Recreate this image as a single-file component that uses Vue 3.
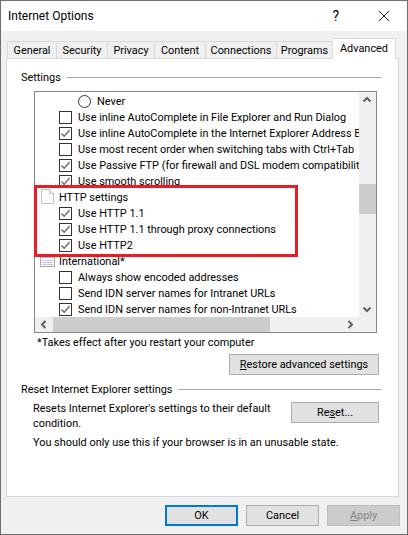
<template>
  <div class="window">
    <div class="titlebar">
      <span class="title">Internet Options</span>
      <span class="help">?</span>
      <svg class="close" width="12" height="12" viewBox="0 0 12 12">
        <path d="M1 1 L11 11 M11 1 L1 11" stroke="#222" stroke-width="1" fill="none" />
      </svg>
    </div>

    <div class="body">
      <div class="tabs">
        <div
          v-for="t in tabs"
          :key="t.name"
          class="tab"
          :class="{ active: t.name === 'Advanced' }"
          :style="{ width: t.w + 'px' }"
        >{{ t.name }}</div>
      </div>

      <div class="panel">
        <div class="legend"><span>Settings</span><i></i></div>

        <div class="listbox">
          <div class="rows">
            <div v-for="(r, i) in rows" :key="i" class="row" :class="r.type">
              <svg v-if="r.type === 'page'" class="gicon" width="15" height="16" viewBox="0 0 15 16">
                <path d="M1.5 .5 H9.5 L13.5 4.5 V14.5 H1.5 Z" fill="#fdfdfd" stroke="#c4c4c4" />
                <path d="M9.5 .5 V4.5 H13.5" fill="#f0f0f0" stroke="#c4c4c4" />
              </svg>
              <svg v-else-if="r.type === 'intl'" class="gicon" width="15" height="16" viewBox="0 0 15 16">
                <rect x=".5" y="1.5" width="14" height="12" fill="#fff" stroke="#a9a9a9" />
                <rect x="1" y="2" width="13" height="3" fill="#a9c1e4" />
                <path d="M2 7.5 H13 M2 9.5 H13 M2 11.5 H13" stroke="#bccbdf" />
              </svg>
              <svg v-else-if="r.type === 'radio'" class="radio" width="13" height="13" viewBox="0 0 13 13">
                <circle cx="6.5" cy="6.5" r="6" fill="#fff" stroke="#333" />
              </svg>
              <span v-else class="check">
                <svg v-if="r.on" width="11" height="11" viewBox="0 0 11 11">
                  <path d="M1.5 5.5 L4.2 8.3 L9.5 2" stroke="#666" stroke-width="1.3" fill="none" />
                </svg>
              </span>
              <span class="label">{{ r.text }}</span>
            </div>
          </div>

          <div class="vbar">
            <svg width="16" height="16" viewBox="0 0 16 16"><path d="M4.5 9.5 L8 6 L11.5 9.5" stroke="#606060" stroke-width="2" fill="none" /></svg>
            <div class="vtrack"><div class="vthumb"></div></div>
            <svg width="16" height="16" viewBox="0 0 16 16"><path d="M4.5 6.5 L8 10 L11.5 6.5" stroke="#606060" stroke-width="2" fill="none" /></svg>
          </div>

          <div class="hbar">
            <svg width="18" height="15" viewBox="0 0 18 15"><path d="M10.5 4 L7 7.5 L10.5 11" stroke="#606060" stroke-width="2" fill="none" /></svg>
            <div class="htrack"><div class="hthumb"></div></div>
            <svg width="18" height="15" viewBox="0 0 18 15"><path d="M7.5 4 L11 7.5 L7.5 11" stroke="#606060" stroke-width="2" fill="none" /></svg>
          </div>
          <div class="corner"></div>
        </div>

        <div class="note">*Takes effect after you restart your computer</div>
        <div class="restore-row">
          <button class="btn restore"><u>R</u>estore advanced settings</button>
        </div>

        <div class="legend second"><span>Reset Internet Explorer settings</span><i></i></div>
        <div class="reset-row">
          <p>Resets Internet Explorer's settings to their default condition.</p>
          <button class="btn reset">Re<u>s</u>et...</button>
        </div>
        <p class="warn">You should only use this if your browser is in an unusable state.</p>
      </div>

      <div class="footer">
        <button class="btn ok">OK</button>
        <button class="btn">Cancel</button>
        <button class="btn disabled"><u>A</u>pply</button>
      </div>
    </div>

    <!-- red annotation drawn on top of the screenshot -->
    <div class="highlight"></div>
  </div>
</template>

<script setup>
const tabs = [
  { name: 'General', w: 50 },
  { name: 'Security', w: 51 },
  { name: 'Privacy', w: 47 },
  { name: 'Content', w: 51 },
  { name: 'Connections', w: 71 },
  { name: 'Programs', w: 56 },
  { name: 'Advanced', w: 63 }
]

const rows = [
  { type: 'radio', text: 'Never' },
  { type: 'item', text: 'Use inline AutoComplete in File Explorer and Run Dialog', on: false },
  { type: 'item', text: 'Use inline AutoComplete in the Internet Explorer Address Bar', on: true },
  { type: 'item', text: 'Use most recent order when switching tabs with Ctrl+Tab', on: false },
  { type: 'item', text: 'Use Passive FTP (for firewall and DSL modem compatibility)', on: true },
  { type: 'item', text: 'Use smooth scrolling', on: true },
  { type: 'page', text: 'HTTP settings' },
  { type: 'item', text: 'Use HTTP 1.1', on: true },
  { type: 'item', text: 'Use HTTP 1.1 through proxy connections', on: true },
  { type: 'item', text: 'Use HTTP2', on: true },
  { type: 'intl', text: 'International*' },
  { type: 'item', text: 'Always show encoded addresses', on: false },
  { type: 'item', text: 'Send IDN server names for Intranet URLs', on: false },
  { type: 'item', text: 'Send IDN server names for non-Intranet URLs', on: true }
]
</script>

<style>
html, body {
  margin: 0;
  background: #fff;
}
</style>

<style scoped>
.window {
  position: relative;
  width: 408px;
  height: 535px;
  box-sizing: border-box;
  border: 1px solid #6e6e6e;
  overflow: hidden;
  display: flex;
  flex-direction: column;
  font-family: Roboto, "Liberation Sans", sans-serif;
  font-size: 10.9px;
  color: #000;
  background: #f0f0f0;
}

.titlebar {
  height: 30px;
  background: #fff;
  display: flex;
  align-items: center;
  flex-shrink: 0;
}
.title {
  margin-left: 7px;
  font-size: 12px;
}
.help {
  margin-left: auto;
  margin-right: 39px;
  font-size: 14px;
}
.close {
  margin-right: 17px;
}

.body {
  flex: 1;
  display: flex;
  flex-direction: column;
  padding: 7px 7px 0 5px;
}

.tabs {
  display: flex;
  align-items: flex-end;
  height: 21px;
  padding-left: 1px;
  margin-bottom: -1px;
  position: relative;
  z-index: 1;
}
.tab {
  height: 18px;
  box-sizing: border-box;
  border: 1px solid #d9d9d9;
  border-left-width: 0;
  border-bottom: 1px solid #d9d9d9;
  background: #f0f0f0;
  text-align: center;
  line-height: 17px;
}
.tab:first-child {
  border-left-width: 1px;
}
.tab.active {
  height: 21px;
  background: #fff;
  border-bottom: 0;
  line-height: 19px;
}

.panel {
  height: 439px;
  box-sizing: border-box;
  width: 393px;
  border: 1px solid #d9d9d9;
  background: #fff;
  padding: 11px 17px 0 14px;
}

.legend {
  display: flex;
  align-items: center;
  gap: 6px;
  height: 14px;
  line-height: 14px;
}
.legend span {
  padding-top: 1px;
}
.legend i {
  flex: 1;
  height: 1px;
  background: #a8a8a8;
}
.legend.second {
  margin-top: 7px;
}

.listbox {
  margin: 7px 4px 0 13px;
  height: 242px;
  box-sizing: border-box;
  border: 1px solid #828790;
  display: grid;
  grid-template-columns: 1fr 17px;
  grid-template-rows: 1fr 15px;
}
.rows {
  min-width: 0;
  overflow: hidden;
  padding-top: 1px;
}
.row {
  height: 16px;
  display: flex;
  align-items: center;
  padding-left: 24px;
  white-space: nowrap;
}
.row.page,
.row.intl {
  padding-left: 5px;
}
.row.radio {
  padding-left: 43px;
}
.gicon {
  margin-right: 4px;
  flex-shrink: 0;
}
.radio svg {
  margin-right: 6px;
  flex-shrink: 0;
}
.check {
  width: 13px;
  height: 13px;
  box-sizing: border-box;
  border: 1px solid #333;
  margin-right: 6px;
  flex-shrink: 0;
  display: flex;
  background: #fff;
}

.vbar {
  background: #f0f0f0;
  display: flex;
  flex-direction: column;
  grid-row: 1;
  grid-column: 2;
}
.vbar svg,
.hbar svg {
  flex-shrink: 0;
}
.vtrack {
  flex: 1;
  padding-top: 76px;
}
.vthumb {
  height: 30px;
  background: #cdcdcd;
}
.hbar {
  background: #f0f0f0;
  display: flex;
  grid-row: 2;
  grid-column: 1;
}
.htrack {
  flex: 1;
}
.hthumb {
  width: 217px;
  height: 15px;
  background: #cdcdcd;
}
.corner {
  background: #f0f0f0;
}

.note {
  margin: 1px 0 0 16px;
  height: 16px;
  line-height: 18px;
}
.restore-row {
  margin-top: 4px;
  display: flex;
  justify-content: flex-end;
  padding-right: 2px;
}

.btn {
  font: inherit;
  color: inherit;
  height: 21px;
  width: 73px;
  box-sizing: border-box;
  padding: 0;
  border: 1px solid #adadad;
  background: #e1e1e1;
}
.btn.restore {
  width: 150px;
}
.btn.reset {
  width: 88px;
  margin-top: 2px;
  flex-shrink: 0;
}
.btn.ok {
  border: 2px solid #0078d7;
}
.btn.disabled {
  background: #cccccc;
  border-color: #bfbfbf;
  color: #838383;
}

.reset-row {
  display: flex;
  justify-content: space-between;
  margin-top: 4px;
  padding: 0 2px 0 12px;
}
.reset-row p {
  margin: 0;
  padding-top: 1px;
  width: 250px;
  line-height: 15px;
}
.warn {
  margin: 4px 0 0 12px;
  line-height: 15px;
}

.footer {
  display: flex;
  gap: 8px;
  justify-content: flex-end;
  margin-top: 8px;
}

.highlight {
  position: absolute;
  left: 33px;
  top: 184px;
  width: 264px;
  height: 72px;
  box-sizing: border-box;
  border: 3px solid #ed1c24;
  pointer-events: none;
  z-index: 2;
}
</style>
